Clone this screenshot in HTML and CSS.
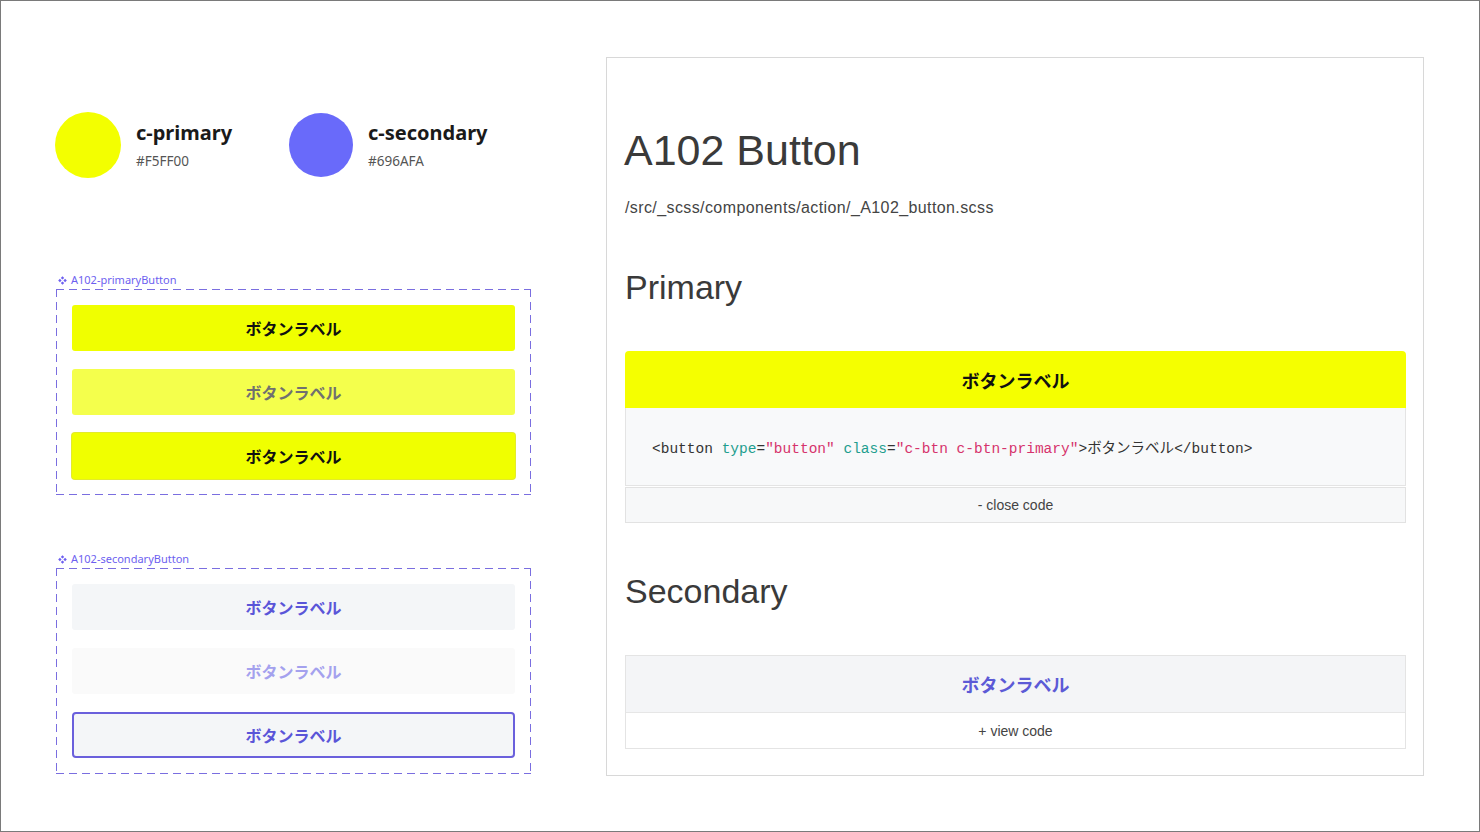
FILE: index.html
```html
<!DOCTYPE html>
<html lang="ja">
<head>
<meta charset="utf-8">
<title>A102 Button</title>
<link rel="stylesheet" href="styles.css">
</head>
<body>
<div class="page">
  <div class="design">
    <div class="swatches">
      <div class="swatch">
        <div class="dot dot-primary"></div>
        <div class="swatch-text">
          <div class="swatch-name">c-primary</div>
          <div class="swatch-hex">#F5FF00</div>
        </div>
      </div>
      <div class="swatch">
        <div class="dot dot-secondary"></div>
        <div class="swatch-text">
          <div class="swatch-name">c-secondary</div>
          <div class="swatch-hex">#696AFA</div>
        </div>
      </div>
    </div>

    <div class="group group-first">
      <div class="group-label">
        <svg class="comp-icon" viewBox="0 0 10 10" width="9" height="9"><path d="M5 0.2L6.9 2.1L5 4L3.1 2.1Z M5 6L6.9 7.9L5 9.8L3.1 7.9Z M0.2 5L2.1 3.1L4 5L2.1 6.9Z M6 5L7.9 3.1L9.8 5L7.9 6.9Z" fill="#6d5ff0"/></svg>
        <span>A102-primaryButton</span>
      </div>
      <div class="group-box">
        <div class="dbtn dbtn-primary">ボタンラベル</div>
        <div class="dbtn dbtn-primary-disabled">ボタンラベル</div>
        <div class="dbtn dbtn-primary-focus">ボタンラベル</div>
      </div>
    </div>

    <div class="group group-second">
      <div class="group-label">
        <svg class="comp-icon" viewBox="0 0 10 10" width="9" height="9"><path d="M5 0.2L6.9 2.1L5 4L3.1 2.1Z M5 6L6.9 7.9L5 9.8L3.1 7.9Z M0.2 5L2.1 3.1L4 5L2.1 6.9Z M6 5L7.9 3.1L9.8 5L7.9 6.9Z" fill="#6d5ff0"/></svg>
        <span>A102-secondaryButton</span>
      </div>
      <div class="group-box">
        <div class="dbtn dbtn-secondary">ボタンラベル</div>
        <div class="dbtn dbtn-secondary-disabled">ボタンラベル</div>
        <div class="dbtn dbtn-secondary-focus">ボタンラベル</div>
      </div>
    </div>
  </div>

  <div class="docs">
    <h1 class="docs-title">A102 Button</h1>
    <p class="docs-path">/src/_scss/components/action/_A102_button.scss</p>

    <h2 class="docs-h2">Primary</h2>
    <div class="demo">
      <div class="demo-btn demo-btn-primary">ボタンラベル</div>
      <div class="demo-code"><code><span class="t">&lt;button</span> <span class="a">type</span>=<span class="s">"button"</span> <span class="a">class</span>=<span class="s">"c-btn c-btn-primary"</span><span class="t">&gt;</span>ボタンラベル<span class="t">&lt;/button&gt;</span></code></div>
      <div class="demo-toggle demo-toggle-open">- close code</div>
    </div>

    <h2 class="docs-h2 docs-h2-second">Secondary</h2>
    <div class="demo demo-boxed">
      <div class="demo-btn demo-btn-secondary">ボタンラベル</div>
      <div class="demo-toggle">+ view code</div>
    </div>
  </div>
</div>
</body>
</html>
```

FILE: styles.css
```css
* { box-sizing: border-box; }

html, body {
  margin: 0;
  padding: 0;
  background: #ffffff;
}

.page {
  width: 1480px;
  height: 832px;
  border: 1px solid #7a7a7a;
  display: flex;
  align-items: flex-start;
  background: #ffffff;
}

/* ---------- left: design side ---------- */
.design {
  width: 530px;
  padding-left: 54px;
  padding-top: 111px;
  font-family: "Noto Sans", "Noto Sans CJK JP", sans-serif;
}

.swatches {
  display: flex;
  align-items: center;
}

.swatch {
  display: flex;
  align-items: center;
  gap: 15px;
  width: 234px;
}

.dot {
  width: 66px;
  height: 66px;
  border-radius: 50%;
  flex: none;
}

.dot-primary { background: #f3ff00; }
.dot-secondary { background: #696afa; width: 64px; height: 64px; }

.swatch-name {
  font-size: 20px;
  font-weight: 700;
  line-height: 26px;
  color: #1a1a1a;
}

.swatch-hex {
  font-size: 13.5px;
  line-height: 20px;
  margin-top: 5px;
  color: #555;
}

.group { padding-left: 1px; }
.group-first { margin-top: 95px; }
.group-second { margin-top: 57px; }

.group-label {
  display: flex;
  align-items: center;
  gap: 4px;
  height: 14px;
  margin-bottom: 2px;
  padding-left: 2px;
  font-size: 11px;
  line-height: 14px;
  color: #6d5ff0;
}

.comp-icon { display: block; }

.group-box {
  width: 475px;
  padding: 16px;
  display: flex;
  flex-direction: column;
  gap: 18px;
  background:
    repeating-linear-gradient(90deg, #7a6ee0 0 8px, transparent 8px 13px) left top / 100% 1px no-repeat,
    repeating-linear-gradient(90deg, #7a6ee0 0 8px, transparent 8px 13px) left bottom / 100% 1px no-repeat,
    repeating-linear-gradient(180deg, #7a6ee0 0 8px, transparent 8px 13px) left top / 1px 100% no-repeat,
    repeating-linear-gradient(180deg, #7a6ee0 0 8px, transparent 8px 13px) right top / 1px 100% no-repeat;
}

.dbtn {
  height: 46px;
  border-radius: 3px;
  display: flex;
  align-items: center;
  justify-content: center;
  font-family: "Noto Sans CJK JP", "Noto Sans", sans-serif;
  font-size: 16px;
  font-weight: 700;
}

.dbtn-primary { background: #f0ff00; color: #111; }
.dbtn-primary-disabled { background: #f4ff4c; color: #707070; }
.dbtn-primary-focus {
  background: #f0ff00;
  color: #111;
  box-shadow: 0 0 0 1px #e3ea2c;
}

.dbtn-secondary { background: #f4f6f8; color: #5a55d8; }
.dbtn-secondary-disabled { background: #fafafa; color: #a4a1ee; }
.dbtn-secondary-focus {
  background: #f4f6f8;
  color: #5a55d8;
  border: 2px solid #6a60dc;
  border-radius: 4px;
}

/* ---------- right: docs side ---------- */
.docs {
  margin-left: 75px;
  margin-top: 56px;
  width: 818px;
  height: 719px;
  border: 1px solid #d8d8d8;
  padding: 66px 17px 0 18px;
  font-family: "Liberation Sans", "Noto Sans CJK JP", sans-serif;
  color: #3a3a3a;
}

.docs-title {
  margin: 0 0 0 -1px;
  font-size: 43px;
  font-weight: 400;
  line-height: 52px;
  color: #3a3a3a;
}

.docs-path {
  margin: 22px 0 0;
  font-size: 16px;
  letter-spacing: 0.4px;
  line-height: 20px;
  color: #444;
}

.docs-h2 {
  margin: 49px 0 0;
  font-size: 34px;
  font-weight: 400;
  line-height: 40px;
  color: #3a3a3a;
}

.docs-h2-second { margin-top: 48px; }

.demo { margin-top: 44px; }

.demo-btn {
  height: 57px;
  display: flex;
  align-items: center;
  justify-content: center;
  font-family: "Noto Sans CJK JP", "Noto Sans", sans-serif;
  font-size: 18px;
  font-weight: 700;
}

.demo-btn-primary {
  background: #f5ff00;
  color: #111;
  border-radius: 4px 4px 0 0;
}

.demo-code {
  height: 78px;
  background: #f8f9fa;
  border: 1px solid #e4e4e4;
  border-top: none;
  display: flex;
  align-items: center;
  padding-left: 26px;
}

.demo-code code {
  font-family: "Liberation Mono", "Noto Sans CJK JP", monospace;
  font-size: 14.5px;
  color: #333;
  white-space: pre;
}

.demo-code .a { color: #1e9e8e; }
.demo-code .s { color: #d6336c; }
.demo-code .t { color: #333; }

.demo-toggle {
  height: 36px;
  display: flex;
  align-items: center;
  justify-content: center;
  font-size: 14px;
  color: #444;
  background: #ffffff;
}

.demo-toggle-open {
  margin-top: 1px;
  height: 36px;
  border: 1px solid #e2e2e2;
  background: #f7f8f9;
}

.demo-boxed {
  border: 1px solid #e4e4e4;
}

.demo-btn-secondary {
  background: #f4f5f7;
  color: #5c5ad6;
  border-bottom: 1px solid #e6e6e6;
  height: 57px;
}

.demo-boxed .demo-toggle { height: 35px; }
```
